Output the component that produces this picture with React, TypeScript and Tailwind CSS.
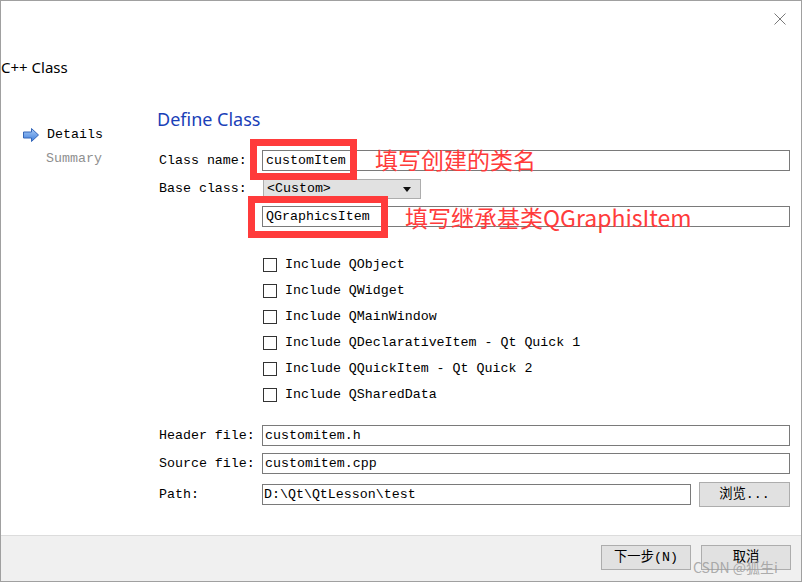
const mono = "font-['Liberation_Mono','Noto_Sans_CJK_SC',monospace] text-[13.3px] leading-[16px]";

const DetailsArrow = () => (
  <svg width="16" height="14" viewBox="0 0 16 14">
    <defs>
      <linearGradient id="arr" x1="0" y1="0" x2="0" y2="1">
        <stop offset="0" stopColor="#a9cbf7" />
        <stop offset="1" stopColor="#3f7fdc" />
      </linearGradient>
    </defs>
    <polygon
      points="0.5,4 8.5,4 8.5,0.5 15.5,7 8.5,13.5 8.5,10 0.5,10"
      fill="url(#arr)"
      stroke="#3566b8"
      strokeWidth="1"
    />
  </svg>
);

const Field = ({ value, pad = "pl-[3px]" }: { value: string; pad?: string }) => (
  <div className={`h-[21px] border border-[#7a7a7a] bg-white flex items-center ${pad} ${mono}`}>
    {value}
  </div>
);

const CheckRow = ({ text }: { text: string }) => (
  <div className="h-[26px] flex items-center gap-[8px]">
    <div className="w-[14px] h-[14px] border border-[#333] bg-white" />
    <span className={mono}>{text}</span>
  </div>
);

const Button = ({ label, w = "w-[90px]" }: { label: string; w?: string }) => (
  <div
    className={`${w} h-[25px] border border-[#adadad] bg-[#e1e1e1] flex items-center justify-center ${mono}`}
  >
    {label}
  </div>
);

const checks = [
  "Include QObject",
  "Include QWidget",
  "Include QMainWindow",
  "Include QDeclarativeItem - Qt Quick 1",
  "Include QQuickItem - Qt Quick 2",
  "Include QSharedData",
];

export default function App() {
  return (
    <div className="relative w-[802px] h-[582px] border border-[#a0a0a0] bg-white flex flex-col text-black overflow-hidden">
      {/* title bar */}
      <div className="h-[36px] flex justify-end items-center pr-[15px]">
        <svg width="12" height="12" viewBox="0 0 12 12">
          <path d="M0.5 0.5 L11.5 11.5 M11.5 0.5 L0.5 11.5" stroke="#7a7a7a" strokeWidth="1" />
        </svg>
      </div>
      <div className="mt-[20px] h-[20px] leading-[20px] text-[15px] font-['Noto_Sans',sans-serif]">
        C++ Class
      </div>

      <div className="flex-1 flex">
        {/* steps */}
        <div className="w-[156px] pt-[48px] pl-[22px] flex flex-col gap-[4px]">
          <div className="h-[20px] flex items-center gap-[8px]">
            <DetailsArrow />
            <span className={mono}>Details</span>
          </div>
          <div className={`h-[20px] flex items-center pl-[23px] text-[#8f8f8f] ${mono}`}>Summary</div>
        </div>

        {/* page */}
        <div className="flex-1 pr-[11px] flex flex-col">
          <div className="mt-[30px] h-[24px] leading-[24px] text-[18px] text-[#1a3fb8] font-['Noto_Sans',sans-serif]">
            Define Class
          </div>

          <div className="mt-[19px] grid grid-cols-[105px_1fr] items-center">
            <span className={`pl-[2px] ${mono}`}>Class name:</span>
            <Field value="customItem" />
          </div>
          <div className="mt-[8px] grid grid-cols-[105px_1fr] items-center">
            <span className={`pl-[2px] ${mono}`}>Base class:</span>
            <div className={`ml-[1px] w-[158px] h-[20px] border border-[#adadad] bg-[#e1e1e1] flex items-center justify-between pl-[3px] pr-[9px] ${mono}`}>
              <span>&lt;Custom&gt;</span>
              <svg width="8" height="5" viewBox="0 0 8 5">
                <polygon points="0,0 8,0 4,5" fill="#111" />
              </svg>
            </div>
          </div>
          <div className="mt-[7px] pl-[105px]">
            <Field value="QGraphicsItem" />
          </div>

          <div className="mt-[25px] pl-[106px] flex flex-col">
            {checks.map((c) => (
              <CheckRow key={c} text={c} />
            ))}
          </div>

          <div className="mt-[17px] grid grid-cols-[105px_1fr] items-center">
            <span className={`pl-[2px] ${mono}`}>Header file:</span>
            <Field value="customitem.h" pad="pl-[2px]" />
          </div>
          <div className="mt-[7px] grid grid-cols-[105px_1fr] items-center">
            <span className={`pl-[2px] ${mono}`}>Source file:</span>
            <Field value="customitem.cpp" pad="pl-[2px]" />
          </div>
          <div className="mt-[8px] grid grid-cols-[105px_1fr_auto] items-center gap-x-0">
            <span className={`pl-[2px] ${mono}`}>Path:</span>
            <div className="mr-[8px]">
              <Field value="D:\Qt\QtLesson\test" pad="pl-[1px]" />
            </div>
            <Button label="浏览..." w="w-[91px]" />
          </div>
        </div>
      </div>

      {/* footer */}
      <div className="h-[46px] border-t border-[#dcdcdc] bg-[#f0f0f0] flex justify-end items-start pt-[9px] pr-[10px] gap-[10px]">
        <Button label="下一步(N)" />
        <Button label="取消" />
      </div>

      {/* annotations */}
      <div className="absolute left-[249px] top-[138px] w-[107px] h-[41px] border-[7px] border-[#ff3b3b]" />
      <div className="absolute left-[247px] top-[195px] w-[140px] h-[42px] border-[7px] border-[#ff3b3b]" />
      <div className="absolute left-[374px] top-[142px] leading-[32px] text-[23px] text-[#ff3b3b] font-['Noto_Sans_CJK_SC',sans-serif]">
        填写创建的类名
      </div>
      <div className="absolute left-[404px] top-[200px] leading-[32px] text-[23px] text-[#ff3b3b] font-['Noto_Sans_CJK_SC',sans-serif]">
        填写继承基类QGraphisItem
      </div>
      <div className="absolute left-[692px] top-[556px] leading-[20px] text-[14px] text-[#9a9a9a]/80 font-['Noto_Sans_CJK_SC',sans-serif]">
        CSDN @狐生i
      </div>
    </div>
  );
}
